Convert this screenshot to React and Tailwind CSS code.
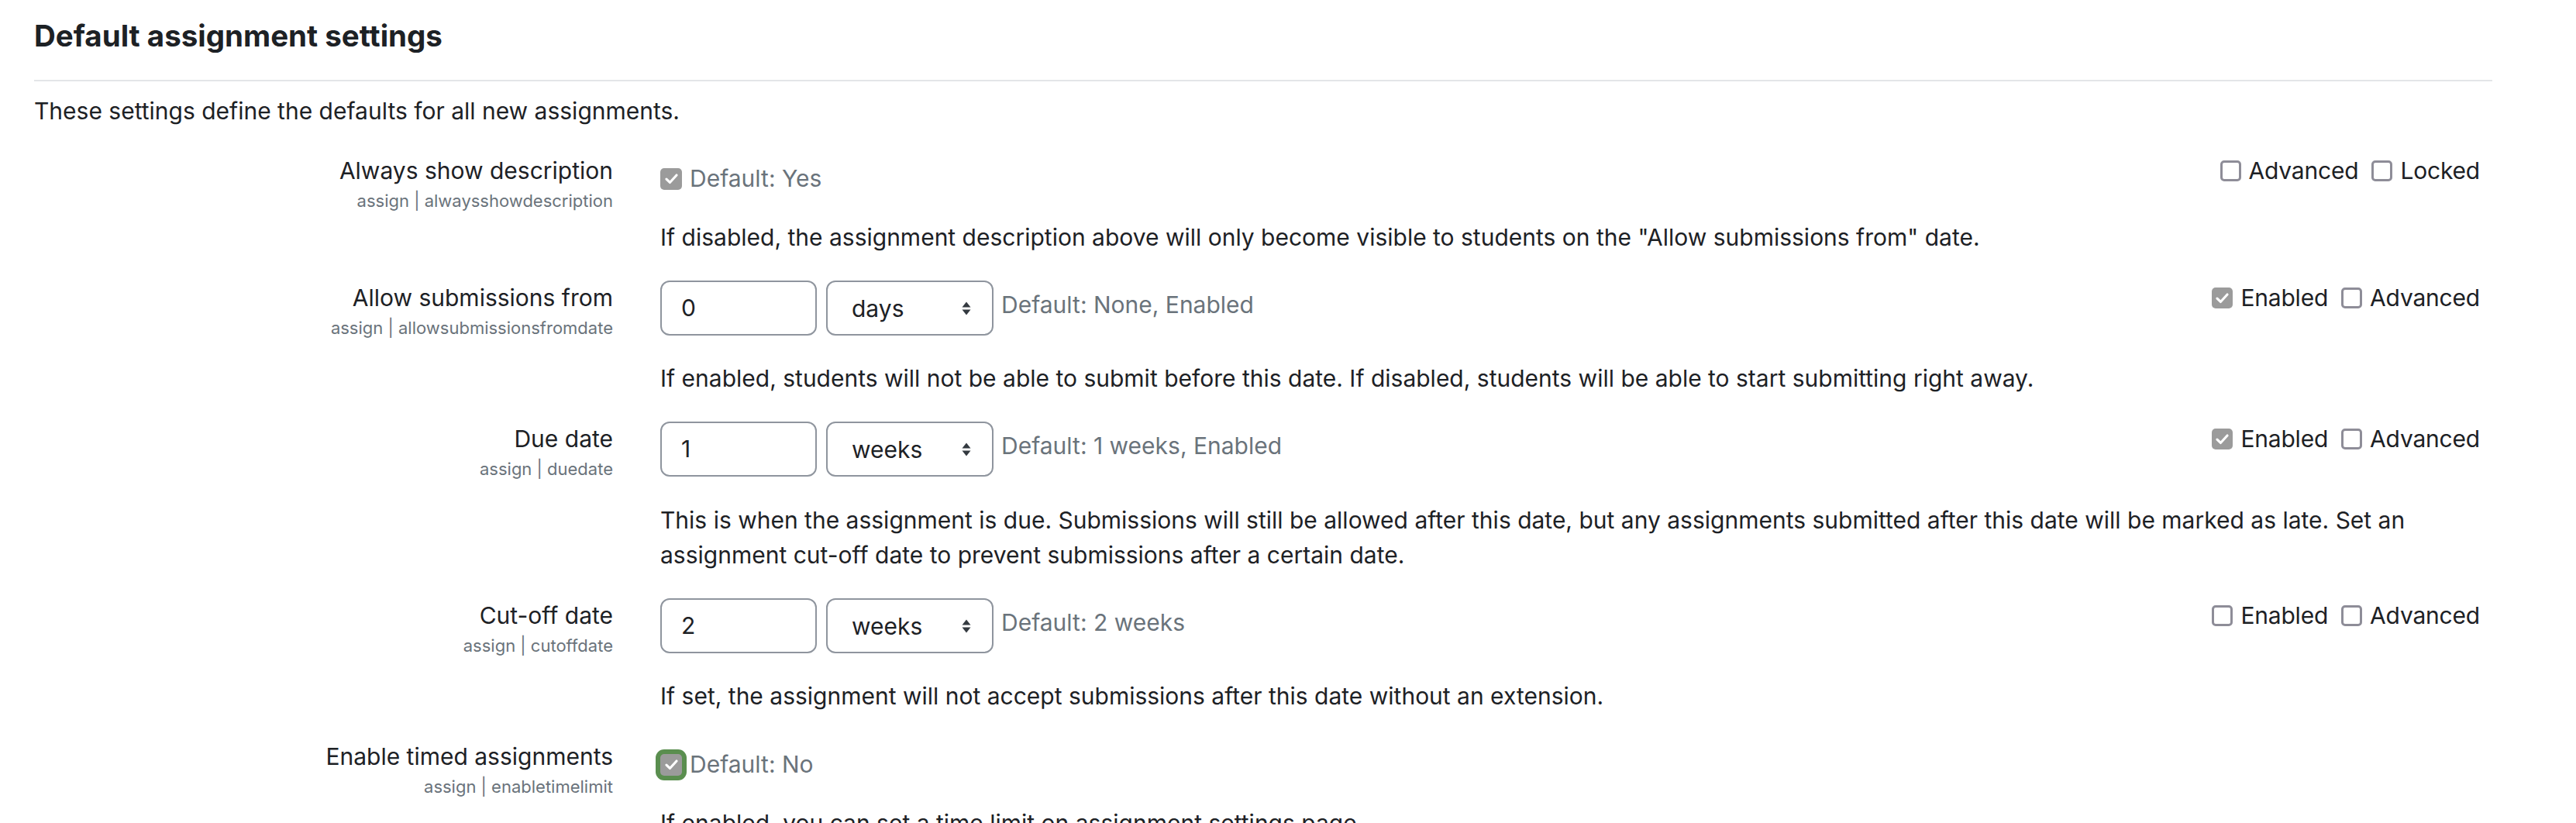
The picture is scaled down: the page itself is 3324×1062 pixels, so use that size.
import React from "react";

function Check({ size = 28, ring = false }) {
  return (
    <span
      className={
        "flex shrink-0 items-center justify-center rounded-[5px] bg-[#9b9b9b] " +
        (ring ? "shadow-[0_0_0_6px_#5a8e4f]" : "")
      }
      style={{ width: size, height: size }}
    >
      <svg width="21" height="21" viewBox="0 0 16 16" fill="none">
        <path d="M3 8.5 L6.4 11.8 L13 4.6" stroke="#fff" strokeWidth="2.4" strokeLinecap="round" strokeLinejoin="round" />
      </svg>
    </span>
  );
}

function Box() {
  return <span className="block h-[27px] w-[27px] shrink-0 rounded-[5px] border-[3px] border-[#8e8d98] bg-white" />;
}

function Opt({ checked, label }) {
  return (
    <div className="flex items-center gap-[10px]">
      {checked ? <Check size={27} /> : <Box />}
      <span className="text-[#1d2125]">{label}</span>
    </div>
  );
}

function Options({ items }) {
  return (
    <div className="flex h-[45px] shrink-0 items-center gap-[17px] tracking-[-0.2px]">
      {items.map((it, i) => (
        <Opt key={i} checked={it[1]} label={it[0]} />
      ))}
    </div>
  );
}

function Label({ title, sub }) {
  return (
    <div className="w-[747px] shrink-0 text-right">
      <div className="leading-[45px] text-[#1d2125]">{title}</div>
      <div className="text-[22px] leading-[32px] text-[#6a737b]">{sub}</div>
    </div>
  );
}

function DurationField({ value, unit, def }) {
  return (
    <div className="flex items-start">
      <div className="flex h-[71px] w-[202px] items-center rounded-[12px] border-2 border-[#8f959e] pl-[25px] text-[#1d2125]">
        {value}
      </div>
      <div className="ml-[12px] flex h-[71px] w-[216px] items-center justify-between rounded-[12px] border-2 border-[#8f959e] pl-[31px] pr-[27px] text-[#1d2125]">
        <span className="mt-[2px]">{unit}</span>
        <svg width="12" height="18" viewBox="0 0 12 18">
          <path d="M0.5 7.5 L6 0.5 L11.5 7.5 Z" fill="#343a40" />
          <path d="M0.5 10.5 L11.5 10.5 L6 17.5 Z" fill="#343a40" />
        </svg>
      </div>
      <div className="ml-[10px] mt-[9px] leading-[45px] text-[#6a737b]">{def}</div>
    </div>
  );
}

function CheckField({ def, ring }) {
  return (
    <div className="mt-[10px] flex h-[45px] items-center">
      <Check size={28} ring={ring} />
      <span className="ml-[10px] text-[#6a737b]">{def}</span>
    </div>
  );
}

function Row({ title, sub, field, options, desc, descMt }) {
  return (
    <div className="flex">
      <Label title={title} sub={sub} />
      <div className="ml-[61px] w-[2348px] shrink-0">
        <div className="flex items-start justify-between">
          {field}
          {options ? <Options items={options} /> : null}
        </div>
        <div className="text-[#1d2125]" style={{ marginTop: descMt }}>
          {desc}
        </div>
      </div>
    </div>
  );
}

export default function App() {
  return (
    <div className="h-[1062px] w-full overflow-hidden bg-white font-[Inter,sans-serif] text-[30px] leading-[45px] text-[#1d2125]">
      <div className="w-[3232px] pl-[44px]">
        <h3 className="pt-[23px] text-[38.5px] font-bold leading-[46px] text-[#1d2125]">Default assignment settings</h3>
        <div className="mt-[34px] h-[2px] w-[3172px] bg-[#e3e5e8]" />
        <p className="mt-[16px]">These settings define the defaults for all new assignments.</p>
        <div className="mt-[32px] flex flex-col gap-[33px]">
          <Row
            title="Always show description"
            sub="assign | alwaysshowdescription"
            field={<CheckField def="Default: Yes" />}
            options={[["Advanced", false], ["Locked", false]]}
            desc={'If disabled, the assignment description above will only become visible to students on the "Allow submissions from" date.'}
            descMt={31}
          />
          <Row
            title="Allow submissions from"
            sub="assign | allowsubmissionsfromdate"
            field={<DurationField value="0" unit="days" def="Default: None, Enabled" />}
            options={[["Enabled", true], ["Advanced", false]]}
            desc="If enabled, students will not be able to submit before this date. If disabled, students will be able to start submitting right away."
            descMt={33}
          />
          <Row
            title="Due date"
            sub="assign | duedate"
            field={<DurationField value="1" unit="weeks" def="Default: 1 weeks, Enabled" />}
            options={[["Enabled", true], ["Advanced", false]]}
            desc="This is when the assignment is due. Submissions will still be allowed after this date, but any assignments submitted after this date will be marked as late. Set an assignment cut-off date to prevent submissions after a certain date."
            descMt={34}
          />
          <Row
            title="Cut-off date"
            sub="assign | cutoffdate"
            field={<DurationField value="2" unit="weeks" def="Default: 2 weeks" />}
            options={[["Enabled", false], ["Advanced", false]]}
            desc="If set, the assignment will not accept submissions after this date without an extension."
            descMt={33}
          />
          <Row
            title="Enable timed assignments"
            sub="assign | enabletimelimit"
            field={<CheckField def="Default: No" ring />}
            desc="If enabled, you can set a time limit on assignment settings page."
            descMt={31}
          />
        </div>
      </div>
    </div>
  );
}
